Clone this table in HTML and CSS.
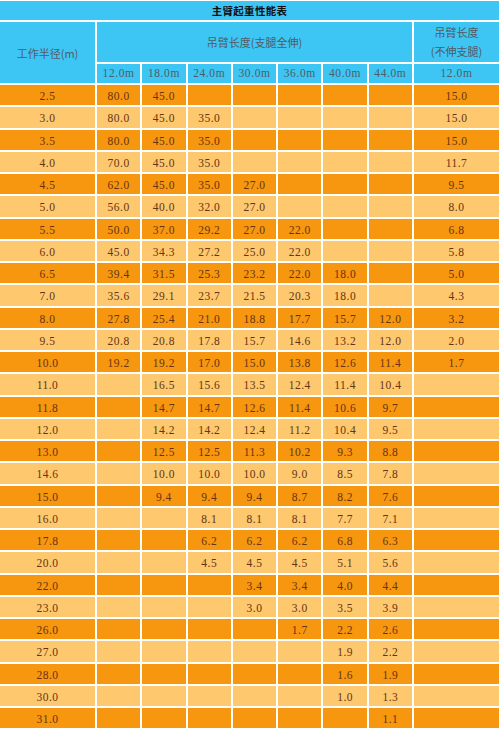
FILE: index.html
```html
<!DOCTYPE html>
<html lang="zh">
<head>
<meta charset="utf-8">
<title>主臂起重性能表</title>
<link rel="stylesheet" href="styles.css">
</head>
<body>
<div class="table">
  <div class="cell title">主臂起重性能表</div>
  <div class="cell hd radius">工作半径(m)</div>
  <div class="cell hd span7">吊臂长度(支腿全伸)</div>
  <div class="cell hd two">吊臂长度<br>(不伸支腿)</div>
  <div class="cell hd num">12.0m</div>
  <div class="cell hd num">18.0m</div>
  <div class="cell hd num">24.0m</div>
  <div class="cell hd num">30.0m</div>
  <div class="cell hd num">36.0m</div>
  <div class="cell hd num">40.0m</div>
  <div class="cell hd num">44.0m</div>
  <div class="cell hd num">12.0m</div>

  <div class="row dk"><div>2.5</div><div>80.0</div><div>45.0</div><div></div><div></div><div></div><div></div><div></div><div>15.0</div></div>
  <div class="row lt"><div>3.0</div><div>80.0</div><div>45.0</div><div>35.0</div><div></div><div></div><div></div><div></div><div>15.0</div></div>
  <div class="row dk"><div>3.5</div><div>80.0</div><div>45.0</div><div>35.0</div><div></div><div></div><div></div><div></div><div>15.0</div></div>
  <div class="row lt"><div>4.0</div><div>70.0</div><div>45.0</div><div>35.0</div><div></div><div></div><div></div><div></div><div>11.7</div></div>
  <div class="row dk"><div>4.5</div><div>62.0</div><div>45.0</div><div>35.0</div><div>27.0</div><div></div><div></div><div></div><div>9.5</div></div>
  <div class="row lt"><div>5.0</div><div>56.0</div><div>40.0</div><div>32.0</div><div>27.0</div><div></div><div></div><div></div><div>8.0</div></div>
  <div class="row dk"><div>5.5</div><div>50.0</div><div>37.0</div><div>29.2</div><div>27.0</div><div>22.0</div><div></div><div></div><div>6.8</div></div>
  <div class="row lt"><div>6.0</div><div>45.0</div><div>34.3</div><div>27.2</div><div>25.0</div><div>22.0</div><div></div><div></div><div>5.8</div></div>
  <div class="row dk"><div>6.5</div><div>39.4</div><div>31.5</div><div>25.3</div><div>23.2</div><div>22.0</div><div>18.0</div><div></div><div>5.0</div></div>
  <div class="row lt"><div>7.0</div><div>35.6</div><div>29.1</div><div>23.7</div><div>21.5</div><div>20.3</div><div>18.0</div><div></div><div>4.3</div></div>
  <div class="row dk"><div>8.0</div><div>27.8</div><div>25.4</div><div>21.0</div><div>18.8</div><div>17.7</div><div>15.7</div><div>12.0</div><div>3.2</div></div>
  <div class="row lt"><div>9.5</div><div>20.8</div><div>20.8</div><div>17.8</div><div>15.7</div><div>14.6</div><div>13.2</div><div>12.0</div><div>2.0</div></div>
  <div class="row dk"><div>10.0</div><div>19.2</div><div>19.2</div><div>17.0</div><div>15.0</div><div>13.8</div><div>12.6</div><div>11.4</div><div>1.7</div></div>
  <div class="row lt"><div>11.0</div><div></div><div>16.5</div><div>15.6</div><div>13.5</div><div>12.4</div><div>11.4</div><div>10.4</div><div></div></div>
  <div class="row dk"><div>11.8</div><div></div><div>14.7</div><div>14.7</div><div>12.6</div><div>11.4</div><div>10.6</div><div>9.7</div><div></div></div>
  <div class="row lt"><div>12.0</div><div></div><div>14.2</div><div>14.2</div><div>12.4</div><div>11.2</div><div>10.4</div><div>9.5</div><div></div></div>
  <div class="row dk"><div>13.0</div><div></div><div>12.5</div><div>12.5</div><div>11.3</div><div>10.2</div><div>9.3</div><div>8.8</div><div></div></div>
  <div class="row lt"><div>14.6</div><div></div><div>10.0</div><div>10.0</div><div>10.0</div><div>9.0</div><div>8.5</div><div>7.8</div><div></div></div>
  <div class="row dk"><div>15.0</div><div></div><div>9.4</div><div>9.4</div><div>9.4</div><div>8.7</div><div>8.2</div><div>7.6</div><div></div></div>
  <div class="row lt"><div>16.0</div><div></div><div></div><div>8.1</div><div>8.1</div><div>8.1</div><div>7.7</div><div>7.1</div><div></div></div>
  <div class="row dk"><div>17.8</div><div></div><div></div><div>6.2</div><div>6.2</div><div>6.2</div><div>6.8</div><div>6.3</div><div></div></div>
  <div class="row lt"><div>20.0</div><div></div><div></div><div>4.5</div><div>4.5</div><div>4.5</div><div>5.1</div><div>5.6</div><div></div></div>
  <div class="row dk"><div>22.0</div><div></div><div></div><div></div><div>3.4</div><div>3.4</div><div>4.0</div><div>4.4</div><div></div></div>
  <div class="row lt"><div>23.0</div><div></div><div></div><div></div><div>3.0</div><div>3.0</div><div>3.5</div><div>3.9</div><div></div></div>
  <div class="row dk"><div>26.0</div><div></div><div></div><div></div><div></div><div>1.7</div><div>2.2</div><div>2.6</div><div></div></div>
  <div class="row lt"><div>27.0</div><div></div><div></div><div></div><div></div><div></div><div>1.9</div><div>2.2</div><div></div></div>
  <div class="row dk"><div>28.0</div><div></div><div></div><div></div><div></div><div></div><div>1.6</div><div>1.9</div><div></div></div>
  <div class="row lt"><div>30.0</div><div></div><div></div><div></div><div></div><div></div><div>1.0</div><div>1.3</div><div></div></div>
  <div class="row dk"><div>31.0</div><div></div><div></div><div></div><div></div><div></div><div></div><div>1.1</div><div></div></div>
</div>
</body>
</html>
```

FILE: styles.css
```css
html, body {
  margin: 0;
  padding: 0;
  background: #ffffff;
}

.table {
  width: 499px;
  padding-top: 1px;
  display: grid;
  grid-template-columns: 95px repeat(7, minmax(0, 1fr)) 85px;
  grid-template-rows: 18.5px 40px 19.5px repeat(29, 20.25px);
  gap: 2px;
  font-family: "Liberation Serif", "Noto Sans CJK SC", serif;
  font-size: 11px;
}

.cell,
.row > div {
  display: flex;
  align-items: center;
  justify-content: center;
  text-align: center;
  min-width: 0;
}

.row {
  display: contents;
}

.title {
  grid-column: 1 / -1;
  background: #3dc6f3;
  color: #111111;
  font-family: "Noto Sans CJK SC", sans-serif;
  font-weight: bold;
  font-size: 10.5px;
  letter-spacing: 0.3px;
}

.hd {
  background: #3dc6f3;
  color: #515c66;
  font-family: "Noto Sans CJK SC", sans-serif;
  font-size: 11px;
}

.hd.num {
  font-family: "Liberation Serif", serif;
  font-size: 11.5px;
  letter-spacing: 0.6px;
}

.radius {
  grid-row: span 2;
  padding-top: 2px;
}

.span7 {
  grid-column: span 7;
}

.two {
  line-height: 19px;
}

.row > div {
  color: #663414;
  font-size: 11.5px;
  letter-spacing: 0.5px;
  padding-top: 2px;
}

.row.dk > div {
  background: #f7960f;
}

.row.lt > div {
  background: #fdc86e;
}
```
